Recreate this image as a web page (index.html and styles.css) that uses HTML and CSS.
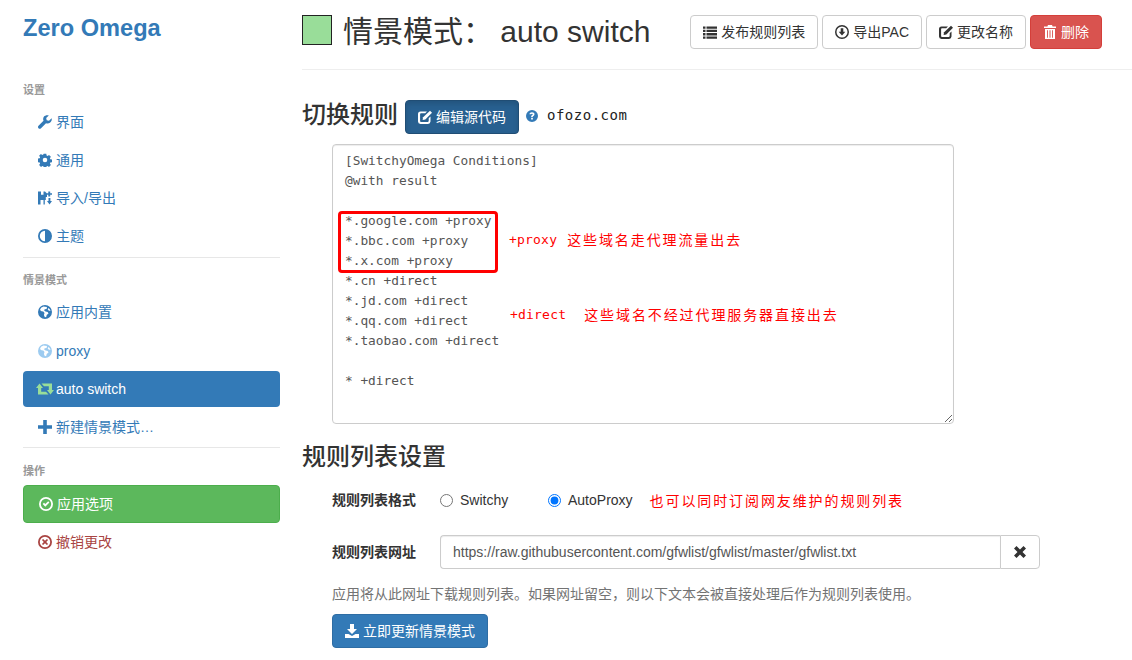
FILE: index.html
```html
<!DOCTYPE html>
<html lang="zh-CN">
<head>
<meta charset="utf-8">
<title>Zero Omega</title>
<link rel="stylesheet" href="styles.css">
</head>
<body>
<svg class="defs" aria-hidden="true">
  <symbol id="i-wrench" viewBox="0 0 14 14"><path d="M13.6 3.2 11 5.800 8.700 5.300 8.200 3l2.600-2.600C8.900-.2 7 .3 6 1.600 5 2.800 4.900 4.400 5.500 5.700L.5 10.700c-.7.700-.7 1.800 0 2.500s1.800.7 2.500 0l5-5c1.400.6 3 .4 4.200-.6 1.300-1.100 1.900-2.800 1.400-4.400z"/></symbol>
  <symbol id="i-gear" viewBox="0 0 14 14"><path fill-rule="evenodd" d="M5.700.8h2.600l.3 1.700 1 .4 1.400-1 1.900 1.900-1 1.400.4 1 1.700.3v2.800l-1.700.3-.4 1 1 1.400-1.900 1.900-1.400-1-1 .4-.3 1.700H5.700l-.3-1.700-1-.4-1.400 1-1.900-1.900 1-1.400-.4-1-1.700-.3V5.500l1.700-.3.4-1-1-1.400L2.900 .9l1.400 1 1-.4zM7 4.700a2.300 2.300 0 1 0 0 4.600 2.300 2.300 0 0 0 0-4.600z"/></symbol>
  <symbol id="i-import" viewBox="0 0 14 14"><path fill-rule="evenodd" d="M0 .5H7L9 2.500V6H7.800V9H6.800V13.500H0zM3 .5V3.800H5.500V.5zM2.500 9V13.500H5.500V9z"/><path d="M10.300.5h1.900v1.700H14v1.600h-1.800v1.700h-1.900V3.800H8.800V2.200h1.500zM10.500 7h1.900v3H14l-2.500 3.500L9 10h1.500z"/></symbol>
  <symbol id="i-adjust" viewBox="0 0 14 14"><path fill-rule="evenodd" d="M7 0a7 7 0 1 1 0 14A7 7 0 0 1 7 0zm0 1.800a5.200 5.200 0 0 0 0 10.400z"/></symbol>
  <symbol id="i-globe" viewBox="0 0 14 14"><path fill-rule="evenodd" d="M7 0a7 7 0 1 1 0 14A7 7 0 0 1 7 0zM5.500 1.500 3 2.800 2 5l1.500 1.200 1.800.3L6.500 8l-.6 2 1 2.300 1.300-.3.500-2 1.800-1.600-.8-1.400-2.200-.5L6 5.200l.8-1 1.800-.3.400-1.800zM10.500 3l-.8 1.200.9 1.300 1.900.4A5.500 5.500 0 0 0 10.500 3z"/></symbol>
  <symbol id="i-retweet" viewBox="0 0 18 14"><path d="M3.500 1.500 7 6H5.200V9.800H10L12.500 12.500H2V6H0zM5.500 1.500H16V8H18L14.500 12.500 11 8H12.800V4.200H8z"/></symbol>
  <symbol id="i-plus" viewBox="0 0 14 14"><path d="M5.200 0h3.600v5.200H14v3.600H8.800V14H5.200V8.800H0V5.200h5.200z"/></symbol>
  <symbol id="i-ok" viewBox="0 0 14 14"><path fill-rule="evenodd" d="M7 0a7 7 0 1 1 0 14A7 7 0 0 1 7 0zm0 1.800a5.200 5.200 0 1 0 0 10.400A5.200 5.200 0 0 0 7 1.800z"/><path d="M3.700 7 5 5.700l1.300 1.400 2.900-2.900 1.200 1.300-4.100 4.200z"/></symbol>
  <symbol id="i-remove" viewBox="0 0 14 14"><path fill-rule="evenodd" d="M7 0a7 7 0 1 1 0 14A7 7 0 0 1 7 0zm0 1.800a5.200 5.200 0 1 0 0 10.400A5.200 5.200 0 0 0 7 1.800z"/><path d="M5.100 3.900 7 5.800l1.900-1.900 1.200 1.200L8.200 7l1.900 1.900-1.200 1.200L7 8.200l-1.900 1.900-1.200-1.200L5.800 7 3.900 5.100z"/></symbol>
  <symbol id="i-list" viewBox="0 0 14 14"><path d="M0 1.500h2.500v2.300H0zM3.500 1.500H14v2.300H3.500zM0 4.800h2.500v2.300H0zM3.500 4.800H14v2.300H3.500zM0 8.100h2.500v2.300H0zM3.500 8.100H14v2.300H3.500zM0 11.400h2.500v2.300H0zM3.500 11.400H14v2.300H3.500z"/></symbol>
  <symbol id="i-circle-down" viewBox="0 0 14 14"><path fill-rule="evenodd" d="M7 0a7 7 0 1 1 0 14A7 7 0 0 1 7 0zm0 1.500a5.500 5.500 0 1 0 0 11 5.500 5.500 0 0 0 0-11z"/><path d="M5.700 3.200h2.600v3.600h2L7 10.600 3.700 6.800h2z"/></symbol>
  <symbol id="i-edit" viewBox="0 0 14 14"><path d="M2.500 1.500H9L7.200 3.300H3a.9.900 0 0 0-.9.900V11c0 .5.400.9.900.9h6.800c.5 0 .9-.4.900-.9V8.200l1.800-1.800V11.500a2.500 2.500 0 0 1-2.500 2.400H2.500A2.500 2.500 0 0 1 0 11.500V4a2.500 2.500 0 0 1 2.500-2.500z"/><path d="M12 .8 14 2.800 7.300 9.500 4.600 10l.5-2.700z"/></symbol>
  <symbol id="i-trash" viewBox="0 0 14 14"><path fill-rule="evenodd" d="M5 0h4l.6 1.500H13V3H1V1.500h3.400zM2 4h10v10H2zM4 5.200v7.600h.9V5.200zM6.500 5.200v7.600h1V5.200zM9.100 5.200v7.600h.9V5.200z"/></symbol>
  <symbol id="i-help" viewBox="0 0 14 14"><path fill-rule="evenodd" d="M7 0a7 7 0 1 1 0 14A7 7 0 0 1 7 0zM7 2.700c-1.700 0-2.900.8-3 2.400h2c.1-.5.400-.8 1-.8.500 0 .9.300.9.700 0 .5-.4.700-.9 1.100-.6.400-1 .9-1 1.900v.4h1.900V8c0-.4.200-.6.700-1 .7-.5 1.300-1 1.300-2 0-1.500-1.200-2.300-2.900-2.300zM6 9.300v1.900h2V9.300z"/></symbol>
  <symbol id="i-download" viewBox="0 0 14 14"><path d="M5 0h4v5h3L7 10 2 5h3zM0 10h3.500L7 12l3.500-2H14v4H0z"/></symbol>
  <symbol id="i-x" viewBox="0 0 14 14"><path d="M3.500 1 7 4.500 10.500 1 13 3.500 9.500 7 13 10.500 10.500 13 7 9.500 3.500 13 1 10.500 4.500 7 1 3.500z"/></symbol>
</svg>
<div class="app">
  <aside class="sidebar">
    <h1 class="brand">Zero Omega</h1>
    <h2 class="nav-head nav-head-first">设置</h2>
    <ul class="nav">
      <li><a class="nav-link"><svg class="ico"><use href="#i-wrench"/></svg>界面</a></li>
      <li><a class="nav-link"><svg class="ico"><use href="#i-gear"/></svg>通用</a></li>
      <li><a class="nav-link"><svg class="ico"><use href="#i-import"/></svg>导入/导出</a></li>
      <li><a class="nav-link"><svg class="ico"><use href="#i-adjust"/></svg>主题</a></li>
    </ul>
    <hr class="nav-rule nav-rule-a">
    <h2 class="nav-head">情景模式</h2>
    <ul class="nav">
      <li><a class="nav-link"><svg class="ico"><use href="#i-globe"/></svg>应用内置</a></li>
      <li><a class="nav-link nav-proxy"><svg class="ico ico-light"><use href="#i-globe"/></svg>proxy</a></li>
      <li><a class="nav-link nav-active"><svg class="ico ico-retweet"><use href="#i-retweet"/></svg>auto switch</a></li>
      <li><a class="nav-link"><svg class="ico"><use href="#i-plus"/></svg>新建情景模式…</a></li>
    </ul>
    <hr class="nav-rule nav-rule-b">
    <h2 class="nav-head">操作</h2>
    <a class="apply"><svg class="ico"><use href="#i-ok"/></svg>应用选项</a>
    <a class="nav-link revert"><svg class="ico"><use href="#i-remove"/></svg>撤销更改</a>
  </aside>
  <main class="content">
    <header class="page-head">
      <span class="swatch"></span>
      <h1 class="page-title">情景模式： <span class="page-name">auto switch</span></h1>
      <div class="actions">
        <a class="btn"><svg class="ico"><use href="#i-list"/></svg>发布规则列表</a>
        <a class="btn"><svg class="ico"><use href="#i-circle-down"/></svg>导出PAC</a>
        <a class="btn"><svg class="ico"><use href="#i-edit"/></svg>更改名称</a>
        <a class="btn btn-danger"><svg class="ico"><use href="#i-trash"/></svg>删除</a>
      </div>
    </header>
    <section>
      <div class="section-head">
        <h3 class="section-title">切换规则</h3>
        <a class="btn btn-primary btn-pressed"><svg class="ico"><use href="#i-edit"/></svg>编辑源代码</a>
        <svg class="ico help-ico"><use href="#i-help"/></svg>
        <span class="site">ofozo.com</span>
      </div>
      <div class="editor">
        <textarea class="source" readonly spellcheck="false">[SwitchyOmega Conditions]
@with result

*.google.com +proxy
*.bbc.com +proxy
*.x.com +proxy
*.cn +direct
*.jd.com +direct
*.qq.com +direct
*.taobao.com +direct

* +direct</textarea>
        <div class="mark-box"></div>
        <div class="note note-proxy"><span class="note-code">+proxy</span><span>这些域名走代理流量出去</span></div>
        <div class="note note-direct"><span class="note-code">+direct</span><span>这些域名不经过代理服务器直接出去</span></div>
      </div>
    </section>
    <section>
      <h3 class="section-title list-title">规则列表设置</h3>
      <div class="form-row format-row">
        <span class="form-label">规则列表格式</span>
        <label class="radio radio-a"><input type="radio" name="fmt">Switchy</label>
        <label class="radio"><input type="radio" name="fmt" checked>AutoProxy</label>
        <span class="note-inline">也可以同时订阅网友维护的规则列表</span>
      </div>
      <div class="form-row url-row">
        <span class="form-label">规则列表网址</span>
        <div class="input-group">
          <input class="url-input" type="text" value="https://raw.githubusercontent.com/gfwlist/gfwlist/master/gfwlist.txt">
          <span class="addon"><svg class="ico-x"><use href="#i-x"/></svg></span>
        </div>
      </div>
      <p class="help-text">应用将从此网址下载规则列表。如果网址留空，则以下文本会被直接处理后作为规则列表使用。</p>
      <a class="btn btn-primary"><svg class="ico"><use href="#i-download"/></svg>立即更新情景模式</a>
    </section>
  </main>
</div>
</body>
</html>
```
FILE: styles.css
```css
* { box-sizing: border-box; }
html, body { margin: 0; padding: 0; background: #fff; }
body {
  font-family: "Liberation Sans", "Noto Sans CJK SC", sans-serif;
  font-size: 14px;
  line-height: 20px;
  color: #333;
  overflow: hidden;
}
.defs { position: absolute; width: 0; height: 0; }
.app { display: flex; align-items: flex-start; height: 660px; overflow: hidden; }

.sidebar { width: 257px; margin-left: 23px; flex: none; }
.brand { margin: 14px 0 0; font-size: 23.6px; line-height: 28px; font-weight: 700; color: #337ab7; }
.nav-head { margin: 0; font-size: 11px; line-height: 16px; font-weight: 700; color: #999; }
.nav-head-first { margin-top: 40px; }
.nav { list-style: none; margin: 5px 0 0; padding: 0; display: flex; flex-direction: column; }
.nav-link { display: flex; align-items: center; height: 38px; padding-left: 15px; color: #337ab7; }
.ico { width: 14px; height: 14px; margin-right: 4px; fill: currentColor; flex: none; }
.ico-light { color: #9ccbf0; }
.nav-active { height: 36px; margin: 1px 0; padding-left: 13px; background: #337ab7; color: #fff; border-radius: 4px; }
.ico-retweet { width: 18px; margin-right: 2px; color: #99dd99; }
.nav-rule { border: 0; border-top: 1px solid #e7e7e7; }
.nav-rule-a { margin: 2px 0 14px; }
.nav-rule-b { margin: 1px 0 15px; }
.nav-proxy { height: 39px; padding-top: 1px; }
.apply { display: flex; align-items: center; height: 38px; margin-top: 6px; padding-left: 15px; background: #5cb85c; border: 1px solid #4cae4c; border-radius: 4px; color: #fff; }
.revert { color: #a94442; }

.content { flex: 1; min-width: 0; margin-left: 22px; }
.page-head { display: flex; align-items: flex-start; padding: 15px 30px 20px 0; border-bottom: 1px solid #eee; height: 70px; }
.swatch { width: 30px; height: 30px; background: #99dd99; border: 1px solid #222; flex: none; }
.page-title { margin: -1px 0 0 11px; font-size: 30px; line-height: 36px; font-weight: 400; white-space: pre; }
.page-name { margin-left: -1px; }
.actions { margin-left: auto; display: flex; gap: 4px; }
.btn { display: inline-flex; align-items: center; height: 34px; padding: 0 12px; border: 1px solid #ccc; border-radius: 4px; background: #fff; color: #333; white-space: nowrap; }
.btn-danger { background: #d9534f; border-color: #d43f3a; color: #fff; }
.btn-primary { background: #337ab7; border-color: #2e6da4; color: #fff; }
.btn-pressed { background: #286090; border-color: #204d74; box-shadow: inset 0 3px 5px rgba(0,0,0,.125); }

.section-head { display: flex; align-items: center; margin-top: 30px; height: 34px; }
.section-title { margin: 0; font-size: 24px; line-height: 32px; font-weight: 500; }
.section-head .section-title { margin-bottom: 4px; }
.section-head .btn { margin-left: 7px; }
.help-ico { margin: 0 0 2px 7px; width: 12px; height: 12px; color: #337ab7; }
.site { margin: 0 0 4px 9px; font-family: "DejaVu Sans Mono", monospace; font-size: 14px; letter-spacing: .5px; color: #222; }

.editor { position: relative; margin: 10px 0 0 30px; width: 622px; height: 280px; }
.source { display: block; width: 622px; height: 280px; padding: 6px 12px; border: 1px solid #ccc; border-radius: 4px; font-family: "DejaVu Sans Mono", monospace; font-size: 12.8px; line-height: 20px; color: #555; box-shadow: inset 0 1px 1px rgba(0,0,0,.075); outline: none; resize: vertical; white-space: pre; overflow: hidden; }
.mark-box { position: absolute; left: 6px; top: 67px; width: 160px; height: 62px; border: 3px solid #f00; border-radius: 4px; }
.note { position: absolute; display: flex; white-space: pre; color: #f00; font-size: 14px; line-height: 20px; letter-spacing: 1.9px; }
.note-code { font-family: "DejaVu Sans Mono", monospace; font-size: 13px; letter-spacing: .2px; }
.note-proxy { left: 177px; top: 86px; gap: 10px; }
.note-direct { left: 178px; top: 161px; gap: 18px; }

.list-title { margin: 17px 0 2px; }
.form-row { display: flex; align-items: center; margin-left: 30px; }
.format-row { margin-top: 10px; height: 34px; }
.form-label { width: 108px; font-weight: 700; flex: none; }
.radio { display: flex; align-items: center; color: #333; flex: none; }
.radio-a { width: 108px; }
.radio input { width: 13px; height: 13px; margin: 0 7px 0 0; accent-color: #0075ff; }
.note-inline { color: #f00; font-size: 14px; letter-spacing: 1.9px; margin: 2px 0 0 17px; }
.url-row { margin-top: 18px; height: 34px; }
.input-group { display: flex; width: 600px; height: 34px; }
.url-input { flex: 1; min-width: 0; height: 34px; padding: 6px 12px; font: inherit; color: #555; border: 1px solid #ccc; border-right: 0; border-radius: 4px 0 0 4px; box-shadow: inset 0 1px 1px rgba(0,0,0,.075); outline: none; }
.addon { display: flex; align-items: center; justify-content: center; width: 40px; border: 1px solid #ccc; border-radius: 0 4px 4px 0; }
.ico-x { width: 14px; height: 14px; fill: #333; }
.help-text { margin: 15px 0 0 30px; color: #737373; }
section > .btn-primary { margin: 10px 0 0 30px; }
```
